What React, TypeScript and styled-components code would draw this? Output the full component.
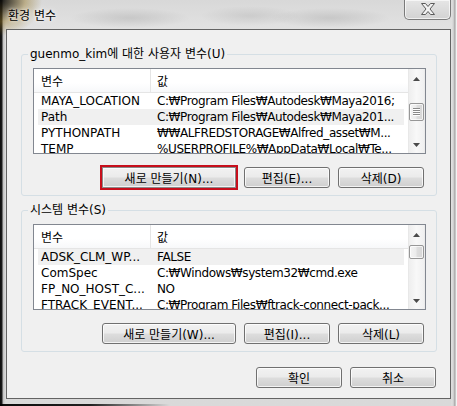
import React from "react";
import styled, { createGlobalStyle, css } from "styled-components";

const FONT = `"DejaVu Sans", "Noto Sans CJK KR", sans-serif`;

const GlobalStyle = createGlobalStyle`
  html, body { margin: 0; padding: 0; }
  body { background: #202020; font-family: ${FONT}; font-size: 12px; color: #000; }
  * { box-sizing: border-box; }
`;

const Window = styled.div`
  width: 457px;
  height: 406px;
  display: flex;
  flex-direction: column;
  padding: 0 6px 7px 6px;
  background:
    linear-gradient(to right, rgba(0,0,0,0.95) 0, rgba(0,0,0,0.85) 90px, rgba(0,0,0,0) 170px) left bottom / 100% 2px no-repeat,
    radial-gradient(42px 36px at 0 0, rgba(10,10,10,0.95), rgba(150,120,40,0.45) 60%, rgba(0,0,0,0) 100%),
    linear-gradient(to right, #0c0c0c 0, #1c1c1c 2px, #bdbdbd 3px, #d6d6d6 5px, rgba(0,0,0,0) 6px),
    linear-gradient(to left, #f2f2f2 0, #f2f2f2 1px, #9a9a9a 2px, #c8c8c8 3px, #e0e0e0 5px, rgba(0,0,0,0) 6px),
    radial-gradient(60px 10px at 130px 18px, rgba(0,0,0,0.1), rgba(0,0,0,0)),
    radial-gradient(50px 10px at 250px 16px, rgba(0,0,0,0.08), rgba(0,0,0,0)),
    radial-gradient(60px 10px at 330px 18px, rgba(0,0,0,0.1), rgba(0,0,0,0)),
    linear-gradient(#d8d8d8, #e2e2e2 30px, #d9d9d9);
`;

const TitleBar = styled.div`
  height: 29px;
  display: flex;
  align-items: center;
  justify-content: space-between;
`;

const Title = styled.span`
  padding-left: 2px;
  font-size: 12px;
  color: #000;
  text-shadow: 0 0 6px rgba(255,255,255,0.95), 0 0 3px rgba(255,255,255,0.9);
`;

const CloseButton = styled.div`
  align-self: flex-start;
  width: 47px;
  height: 20px;
  border: 1px solid #7a7a7a;
  border-top: none;
  border-radius: 0 0 5px 5px;
  background: linear-gradient(#e6e6e6, #dcdcdc 50%, #d2d2d2);
  box-shadow: inset 0 0 0 1px rgba(255,255,255,0.65);
  display: flex;
  align-items: center;
  justify-content: center;
  padding-bottom: 1px;
`;

const Client = styled.div`
  flex: 1;
  border: 1px solid #636363;
  background: #f0f0f0;
  padding: 17px 13px 0 14px;
  display: flex;
  flex-direction: column;
`;

const Group = styled.fieldset<{ $gap?: number }>`
  margin: ${(p) => p.$gap ?? 0}px 0 0 0;
  padding: 0;
  border: 1px solid #d5dfe5;
  border-radius: 3px;
  min-width: 0;
`;

const Legend = styled.legend`
  margin-left: 6px;
  padding: 0 2px;
  line-height: 14px;
  font-size: 12px;
  color: #000;
`;

const GroupBody = styled.div`
  padding: 7px 10px 7px 11px;
  display: flex;
  flex-direction: column;
`;

const ListView = styled.div`
  height: 86px;
  border: 1px solid #828790;
  background: #fff;
  display: flex;
  overflow: hidden;
`;

const ListMain = styled.div`
  flex: 1;
  min-width: 0;
  display: flex;
  flex-direction: column;
  overflow: hidden;
`;

const Header = styled.div`
  height: 24px;
  flex: none;
  display: flex;
  border-bottom: 1px solid #e5e5e5;
  background: linear-gradient(#ffffff, #ffffff 60%, #f7f8fa);
`;

const HeaderCell = styled.div<{ $w?: number }>`
  ${(p) => (p.$w ? `width: ${p.$w}px; border-right: 1px solid #e5e5e5;` : `flex: 1;`)}
  padding-left: ${(p) => (p.$w ? 7 : 6)}px;
  display: flex;
  align-items: center;
  white-space: nowrap;
`;

const Row = styled.div<{ $sel?: boolean }>`
  height: 16px;
  flex: none;
  width: 366px;
  margin-left: 4px;
  display: flex;
  align-items: center;
  background: ${(p) => (p.$sel ? "#f0f0f0" : "transparent")};
`;

const NameCell = styled.div`
  width: 113px;
  padding-left: 3px;
  white-space: nowrap;
  overflow: hidden;
`;

const ValueCell = styled.div`
  flex: 1;
  min-width: 0;
  padding-left: 6px;
  white-space: nowrap;
  overflow: hidden;
  letter-spacing: -0.4px;
`;

const ScrollBar = styled.div`
  width: 17px;
  flex: none;
  display: flex;
  flex-direction: column;
  background: linear-gradient(to right, #e2e2e2 0, #eeeeee 1px, #f8f8f8 50%, #f0f0f0 calc(100% - 1px), #e6e6e6 100%);
`;

const ArrowButton = styled.div<{ $down?: boolean }>`
  height: 17px;
  flex: none;
  display: flex;
  align-items: center;
  justify-content: center;
  padding-top: ${(p) => (p.$down ? 1 : 3)}px;
`;

const Track = styled.div`
  flex: 1;
  display: flex;
  flex-direction: column;
  padding: 0 1px;
`;

const Thumb = styled.div<{ $offset: number; $h: number }>`
  margin-top: ${(p) => p.$offset}px;
  height: ${(p) => p.$h}px;
  border: 1px solid #979797;
  border-radius: 2px;
  background: linear-gradient(to right, #f4f4f4, #ececec 45%, #dedede 55%, #d6d6d6);
  box-shadow: inset 0 0 0 1px rgba(255,255,255,0.7);
  display: flex;
  align-items: center;
  justify-content: center;
`;

const ButtonRow = styled.div<{ $top: number; $right: number }>`
  display: flex;
  justify-content: flex-end;
  gap: 8px;
  margin-top: ${(p) => p.$top}px;
  padding-right: ${(p) => p.$right}px;
`;

const Button = styled.button<{ $wide?: boolean; $focused?: boolean }>`
  width: ${(p) => (p.$wide ? 134 : 86)}px;
  height: 21px;
  padding: 0;
  font-family: ${FONT};
  font-size: 12px;
  color: #000;
  border: 1px solid #707070;
  border-radius: 3px;
  background: linear-gradient(#f2f2f2 0%, #ebebeb 48%, #dddddd 52%, #cfcfcf 100%);
  box-shadow: inset 0 0 0 1px rgba(255,255,255,0.75);
  ${(p) =>
    p.$focused &&
    css`
      border-radius: 0;
      border-color: #8a8a8a;
      outline: 2px solid #c70f1c;
      outline-offset: 0px;
    `}
`;

const UpArrow = () => (
  <svg width="7" height="4" viewBox="0 0 7 4">
    <path d="M3.5 0 L7 4 H0 Z" fill="#4a4a4a" />
  </svg>
);
const DownArrow = () => (
  <svg width="7" height="4" viewBox="0 0 7 4">
    <path d="M0 0 H7 L3.5 4 Z" fill="#4a4a4a" />
  </svg>
);
const Grip = () => (
  <svg width="7" height="8" viewBox="0 0 7 8">
    {[0, 2, 4, 6].map((y) => (
      <g key={y}>
        <rect x="0" y={y} width="7" height="1" fill="#8a8a8a" />
        <rect x="0" y={y + 1} width="7" height="1" fill="#ffffff" />
      </g>
    ))}
  </svg>
);
const CloseGlyph = () => (
  <svg width="14" height="12" viewBox="0 0 14 12">
    <polygon
      points="0.5,0.5 4.5,0.5 7,3.5 9.5,0.5 13.5,0.5 9,6 13.5,11.5 9.5,11.5 7,8.5 4.5,11.5 0.5,11.5 5,6"
      fill="#f2f2f2"
      stroke="#5a5a5a"
      strokeWidth="1"
      strokeLinejoin="round"
    />
  </svg>
);

type Item = { name: string; value: string; sel?: boolean };

const userVars: Item[] = [
  { name: "MAYA_LOCATION", value: "C:₩Program Files₩Autodesk₩Maya2016;" },
  { name: "Path", value: "C:₩Program Files₩Autodesk₩Maya201...", sel: true },
  { name: "PYTHONPATH", value: "₩₩ALFREDSTORAGE₩Alfred_asset₩M..." },
  { name: "TEMP", value: "%USERPROFILE%₩AppData₩Local₩Te..." },
];

const systemVars: Item[] = [
  { name: "ADSK_CLM_WP...", value: "FALSE", sel: true },
  { name: "ComSpec", value: "C:₩Windows₩system32₩cmd.exe" },
  { name: "FP_NO_HOST_C...", value: "NO" },
  { name: "FTRACK_EVENT...", value: "C:₩Program Files₩ftrack-connect-pack..." },
];

const VarList = ({ items, thumbOffset, thumbH, grip }: { items: Item[]; thumbOffset: number; thumbH: number; grip?: boolean }) => (
  <ListView>
    <ListMain>
      <Header>
        <HeaderCell $w={117}>변수</HeaderCell>
        <HeaderCell>값</HeaderCell>
      </Header>
      {items.map((it) => (
        <Row key={it.name} $sel={it.sel}>
          <NameCell>{it.name}</NameCell>
          <ValueCell>{it.value}</ValueCell>
        </Row>
      ))}
    </ListMain>
    <ScrollBar>
      <ArrowButton>
        <UpArrow />
      </ArrowButton>
      <Track>
        <Thumb $offset={thumbOffset} $h={thumbH}>
          {grip && <Grip />}
        </Thumb>
      </Track>
      <ArrowButton $down>
        <DownArrow />
      </ArrowButton>
    </ScrollBar>
  </ListView>
);

export default function App() {
  return (
    <>
      <GlobalStyle />
      <Window>
        <TitleBar>
          <Title>환경 변수</Title>
          <CloseButton>
            <CloseGlyph />
          </CloseButton>
        </TitleBar>
        <Client>
          <Group>
            <Legend>guenmo_kim에 대한 사용자 변수(U)</Legend>
            <GroupBody>
              <VarList items={userVars} thumbOffset={17} thumbH={18} grip />
              <ButtonRow $top={13} $right={2}>
                <Button $wide $focused>새로 만들기(N)...</Button>
                <Button>편집(E)...</Button>
                <Button>삭제(D)</Button>
              </ButtonRow>
            </GroupBody>
          </Group>
          <Group $gap={7}>
            <Legend>시스템 변수(S)</Legend>
            <GroupBody>
              <VarList items={systemVars} thumbOffset={3} thumbH={14} />
              <ButtonRow $top={13} $right={2}>
                <Button $wide>새로 만들기(W)...</Button>
                <Button>편집(I)...</Button>
                <Button>삭제(L)</Button>
              </ButtonRow>
            </GroupBody>
          </Group>
          <ButtonRow $top={15} $right={1}>
            <Button>확인</Button>
            <Button>취소</Button>
          </ButtonRow>
        </Client>
      </Window>
    </>
  );
}
